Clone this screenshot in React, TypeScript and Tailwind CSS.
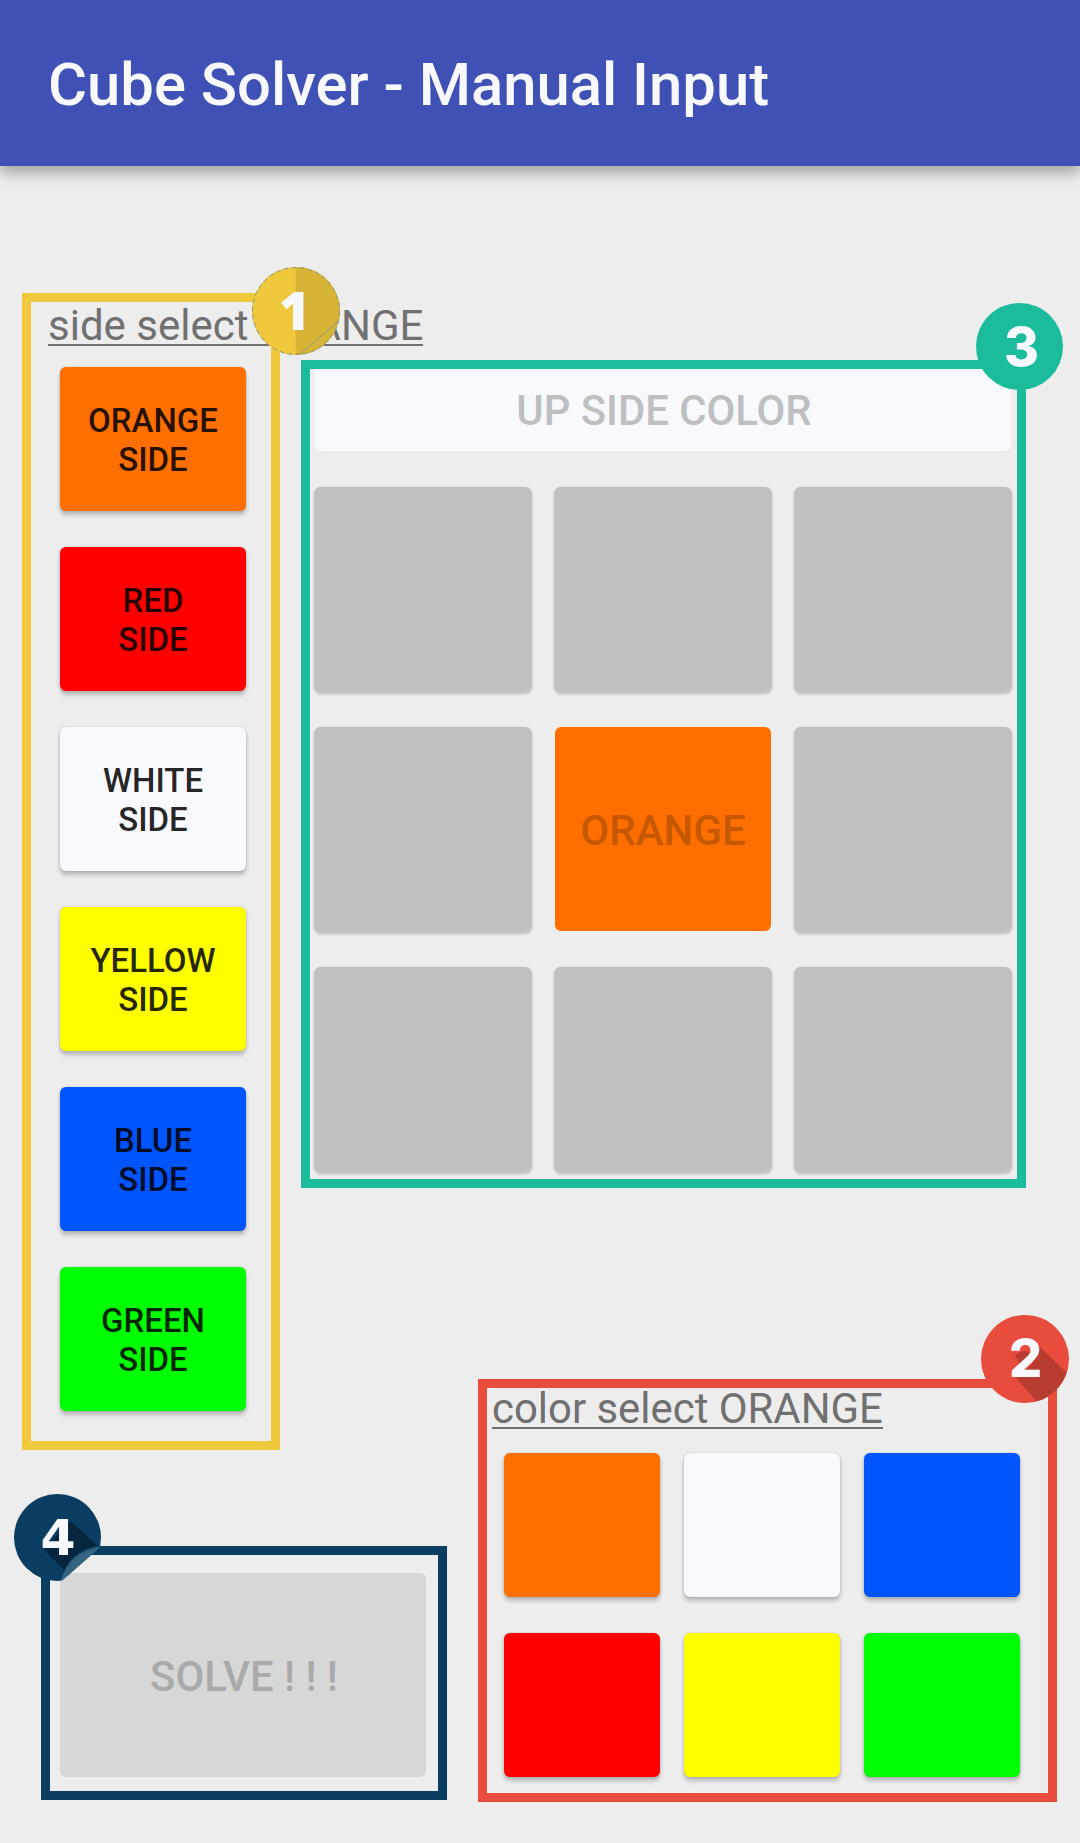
import React from "react";

const sides = [
  { name: "ORANGE", bg: "bg-[#ff6f00]" },
  { name: "RED", bg: "bg-[#ff0000]" },
  { name: "WHITE", bg: "bg-[#f8f8ff]" },
  { name: "YELLOW", bg: "bg-[#ffff00]" },
  { name: "BLUE", bg: "bg-[#0055ff]" },
  { name: "GREEN", bg: "bg-[#00ff00]" },
];

const palette = [
  "bg-[#ff6f00]",
  "bg-[#f8f8ff]",
  "bg-[#0055ff]",
  "bg-[#ff0000]",
  "bg-[#ffff00]",
  "bg-[#00ff00]",
];

const raised = "shadow-[0_4px_4px_rgba(0,0,0,0.22),0_0_2px_rgba(0,0,0,0.22)]";

const badges = {
  1: { fill: "#f0c83c", x: 42.5, y: 63, font: "font-['Open_Sans'] font-extrabold text-[53px]" },
  2: { fill: "#e84c3d", x: 44.5, y: 62, font: "font-[Inter] font-extrabold text-[52px]" },
  3: { fill: "#1bbc9b", x: 46, y: 64, font: "font-[Inter] font-extrabold text-[54px]" },
  4: { fill: "#0a3d62", x: 44.5, y: 61.5, font: "font-['DejaVu_Sans'] font-bold text-[51px]" },
};

function Badge({ n, className }: { n: 1 | 2 | 3 | 4; className: string }) {
  const { fill, x, y, font } = badges[n];
  return (
    <svg viewBox="0 0 88 88" className={`absolute overflow-visible ${className}`}>
      <clipPath id={`disc${n}`}>
        <circle cx="44" cy="44" r="44" />
      </clipPath>
      <g clipPath={`url(#disc${n})`}>
        {n !== 4 && <rect width="88" height="88" fill={fill} />}
        {n === 1 && (
          <>
            <rect x="43.5" width="45" height="88" fill="#d8b436" />
            <path d="M47 88L88 53" stroke="#8b9684" strokeWidth="1" />
          </>
        )}
        {n === 2 && (
          <>
            <path d="M59 32L86 58L70 88H57L35 63L52 48Z" fill="#b83c30" />
            <path d="M34 40Q46 32 50 40L40 52Z" fill="#b83c30" />
          </>
        )}
        {n === 4 && (
          <>
            <path d="M0 0H88V53L48 88H0Z" fill={fill} />
            <path d="M57 27L84 52Q58 58 51 77L30 56Z" fill="#06263f" />
            <path d="M88 53Q55 58 47 89Z" fill="#34647f" />
          </>
        )}
      </g>
      {n === 1 && (
        <circle cx="44" cy="44" r="43.5" fill="none" stroke="#8b9684" strokeWidth="1" strokeDasharray="5 3" />
      )}
      <text x={x} y={y} textAnchor="middle" fill="#f8f8ff" className={font}>
        {n}
      </text>
    </svg>
  );
}

export default function App() {
  return (
    <div className="flex h-[1843px] w-[1080px] flex-col overflow-hidden bg-[#ededed] font-[Roboto,sans-serif]">
      <header className="flex h-[166px] shrink-0 items-center bg-[#3f51b5] pt-[3px] pl-12 shadow-[0_8px_12px_rgba(0,0,0,0.28)]">
        <h1 className="text-[59.8px] leading-[70px] font-medium text-[#f8f8ff]">Cube Solver - Manual Input</h1>
      </header>

      <main className="flex items-start pl-[22px]">
        <div className="mt-[127px] flex w-[279px] shrink-0 flex-col">
          <section className="relative h-[1157px] w-[258px] border-[9px] border-[#f0c83c]">
            <h2 className="mt-[-1px] ml-[17px] h-[66px] w-max text-[42px] leading-[50px] whitespace-nowrap text-[#707070]">
              <span className="block h-[45px] border-b-2 border-[#707070]">side select ORANGE</span>
            </h2>
            <div className="ml-[29px] flex flex-col gap-9">
              {sides.map((s) => (
                <button
                  key={s.name}
                  className={`flex h-36 w-[186px] flex-col items-center justify-center rounded-md pt-0.5 text-[33px] leading-[39px] font-medium text-black/87 ${s.bg} ${raised}`}
                >
                  <span>{s.name}</span>
                  <span>SIDE</span>
                </button>
              ))}
            </div>
            <Badge n={1} className="top-[-35px] left-[221px] size-[88px]" />
          </section>

          <section className="relative mt-24 ml-[19px] h-[254px] w-[406px] border-[9px] border-[#0a3d62] px-[10px] pt-[18px]">
            <button className="h-[204px] w-[366px] rounded-md bg-[#d6d7d7] pt-1 pl-0.5 text-[41.8px] font-medium text-[#a9aaaa]">
              SOLVE ! ! !
            </button>
            <Badge n={4} className="top-[-61px] left-[-36px] size-[87px]" />
          </section>
        </div>

        <div className="mt-[194px] flex flex-col">
          <section className="relative h-[828px] w-[725px] border-[9px] border-[#1bbc9b] px-[5px]">
            <div className="flex h-[82px] w-[696px] items-center justify-center rounded-b-md bg-[#f8f8ff] pt-0.5 pl-0.5 text-[41.8px] font-medium text-[#bdbfc0]">
              UP SIDE COLOR
            </div>
            <div className="mt-9 grid w-[696px] grid-cols-3 gap-x-6 gap-y-9">
              {Array.from({ length: 9 }, (_, i) =>
                i === 4 ? (
                  <div
                    key={i}
                    className="flex h-[204px] items-center justify-center rounded-md bg-[#ff6f00] pt-0.5 text-[42px] font-medium text-[#c55800]"
                  >
                    ORANGE
                  </div>
                ) : (
                  <div
                    key={i}
                    className="h-[204px] rounded-md bg-[#c0c0c0] shadow-[0_1px_0_1px_#c3c3c3,0_2px_3px_1px_rgba(0,0,0,0.2)]"
                  />
                )
              )}
            </div>
            <Badge n={3} className="top-[-66px] left-[666px] size-[87px]" />
          </section>

          <section className="relative mt-[191px] ml-[177px] h-[423px] w-[579px] border-[9px] border-[#e84c3d]">
            <h2 className="mt-[-4px] ml-[5px] h-[69px] w-max text-[41.9px] leading-[50px] whitespace-nowrap text-[#707070]">
              <span className="block h-[45px] border-b-2 border-[#707070]">color select ORANGE</span>
            </h2>
            <div className="ml-[17px] grid w-[516px] grid-cols-3 gap-x-6 gap-y-9">
              {palette.map((bg) => (
                <button key={bg} className={`h-36 rounded-md ${bg} ${raised}`} />
              ))}
            </div>
            <Badge n={2} className="top-[-73px] left-[494px] size-[88px]" />
          </section>
        </div>
      </main>
    </div>
  );
}
